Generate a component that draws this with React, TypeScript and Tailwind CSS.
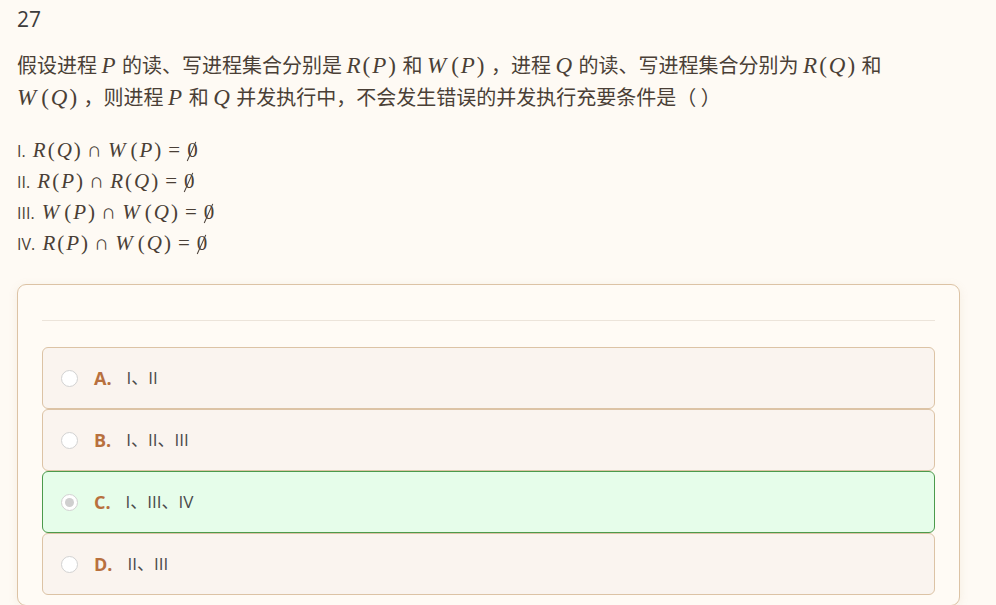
import React from "react";

// inline math, roughly KaTeX sizing and spacing
const M = ({ children, big }: { children: React.ReactNode; big?: boolean }) => (
  <span
    className={
      big
        ? "font-['Liberation_Serif',serif] text-[23px] tracking-[2px] leading-none whitespace-nowrap"
        : "font-['Liberation_Serif',serif] text-[21px] tracking-[2px] leading-none whitespace-nowrap"
    }
  >
    {children}
  </span>
);
const V = ({ children }: { children: React.ReactNode }) => <i className="italic">{children}</i>;
const Wv = () => <i className="italic mr-[3px]">W</i>;
const Cap = () => <span className="mx-[4px]">∩</span>;
const Eq = () => <span className="mx-[5px]">=</span>;
const Empty = () => (
  <span className="relative inline-block">
    0
    <span className="absolute left-[32%] top-[1px] bottom-[-1px] w-[1.3px] bg-current rotate-[24deg]" />
  </span>
);

const opts = [
  { k: "A.", t: "I、II", on: false },
  { k: "B.", t: "I、II、III", on: false },
  { k: "C.", t: "I、III、IV", on: true },
  { k: "D.", t: "II、III", on: false },
];

export default function App() {
  return (
    <div className="min-h-screen bg-[#fefaf4] text-[#4a3f36] px-[17px] pt-[5px] font-['Noto_Sans_CJK_SC',sans-serif]">
      <div className="text-[21px] text-[#3c3c3c] leading-[28px] font-['Open_Sans',sans-serif]">27</div>

      <p className="mt-[16px] text-[20px] leading-[32px] w-[940px]">
        假设进程 <M big><V>P</V></M> 的读、写进程集合分别是 <M big><V>R</V>(<V>P</V>)</M> 和 <M big><Wv />(<V>P</V>)</M> ，进程 <M big><V>Q</V></M> 的读、写进程集合分别为 <M big><V>R</V>(<V>Q</V>)</M> 和{" "}
        <span className="whitespace-nowrap"><M big><Wv />(<V>Q</V>)</M> ，则进程</span> <M big><V>P</V></M> 和 <M big><V>Q</V></M> 并发执行中，不会发生错误的并发执行充要条件是（ ）
      </p>

      <div className="mt-[23px] text-[16px] leading-[31px] font-['Open_Sans',sans-serif]">
        <div>I. <span className="ml-[3px]" /><M><V>R</V>(<V>Q</V>)<Cap /><Wv />(<V>P</V>)<Eq /><Empty /></M></div>
        <div>II. <span className="ml-[3px]" /><M><V>R</V>(<V>P</V>)<Cap /><V>R</V>(<V>Q</V>)<Eq /><Empty /></M></div>
        <div>III. <span className="ml-[3px]" /><M><Wv />(<V>P</V>)<Cap /><Wv />(<V>Q</V>)<Eq /><Empty /></M></div>
        <div>IV. <span className="ml-[3px]" /><M><V>R</V>(<V>P</V>)<Cap /><Wv />(<V>Q</V>)<Eq /><Empty /></M></div>
      </div>

      <div className="mt-[24px] w-[943px] rounded-[9px] border border-[#dcc3a5] bg-[#fffbf5] shadow-[0_2px_10px_rgba(180,150,110,0.12)] px-[24px] pt-[35px] pb-[10px]">
        <div className="border-t border-[#ece4da]" />
        <div className="mt-[26px] flex flex-col">
          {opts.map((o) => (
            <div
              key={o.k}
              className={
                o.on
                  ? "h-[62px] flex items-center rounded-[6px] border border-[#4c9a4c] bg-[#e6fdea] px-[18px]"
                  : "h-[62px] flex items-center rounded-[6px] border border-[#dcc3a5] bg-[#faf4ef] px-[18px]"
              }
            >
              <span className="w-[17px] h-[17px] rounded-full border border-[#d2d2d2] bg-white flex items-center justify-center">
                {o.on && <span className="w-[9px] h-[9px] rounded-full bg-[#cfcfcf]" />}
              </span>
              <span className="ml-[16px] text-[18px] font-bold text-[#b8703e] font-['Open_Sans',sans-serif]">{o.k}</span>
              <span className="ml-[15px] text-[17px] text-[#4a4a4a] font-['Open_Sans','Noto_Sans_CJK_SC',sans-serif]">{o.t}</span>
            </div>
          ))}
        </div>
      </div>
    </div>
  );
}
